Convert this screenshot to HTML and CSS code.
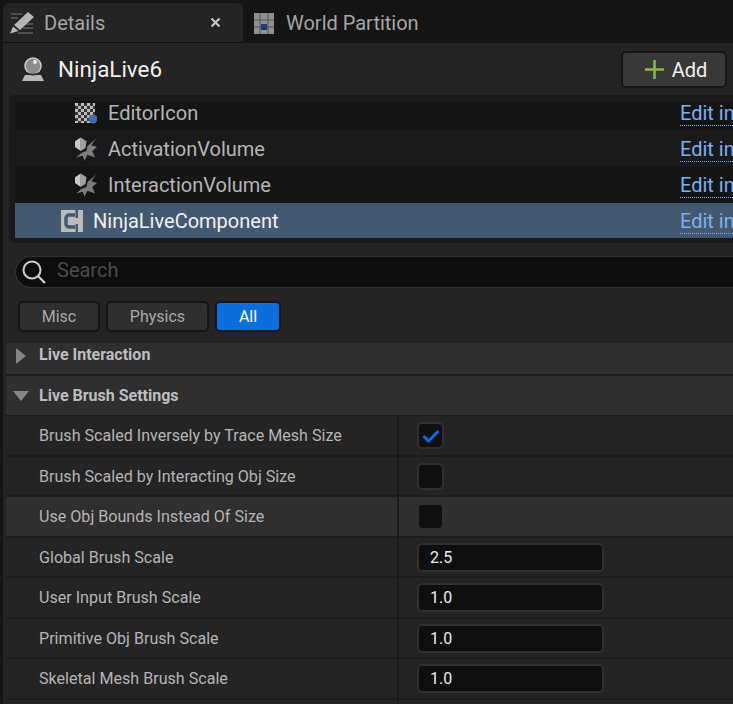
FILE: index.html
```html
<!DOCTYPE html>
<html lang="en">
<head>
<meta charset="utf-8">
<title>Details</title>
<link rel="stylesheet" href="styles.css">
</head>
<body>
<div class="tabs">
  <div class="tab active">
    <svg class="tab-icon" width="24" height="24" viewBox="0 0 24 24"><path d="M1 3h11M1 7h7M15 13h8M13 17h10M8 22h15" stroke="#7a7a7a" stroke-width="1.200" fill="none"/><path d="M18 1l6 5-14 13-6-5zM3 15.500l5.500 4.500L0 22.500z" fill="#b5b5b5"/></svg>
    <span class="tab-label">Details</span>
    <svg class="close" width="11" height="11" viewBox="0 0 11 11"><path d="M1.500 1.500l8 8M9.500 1.500l-8 8" stroke="#c4c4c4" stroke-width="2.200"/></svg>
  </div>
  <div class="tab">
    <svg class="tab-icon wp" width="20" height="21" viewBox="0 0 20 21"><rect width="20" height="21" fill="#8f8f8f"/><path d="M6 0v21M14 0v21M0 7h20M0 14h20" stroke="#555" stroke-width="1"/><rect x="7" y="11" width="6" height="6" fill="#1d3f73"/></svg>
    <span class="tab-label">World Partition</span>
  </div>
</div>
<main class="panel">
  <header class="actor">
    <div class="actor-name">
      <svg width="24" height="24" viewBox="0 0 24 24"><circle cx="12" cy="9" r="8" fill="#8c8c8c" stroke="#c9c9c9" stroke-width="1.500"/><circle cx="14" cy="5" r="2" fill="#eee"/><path d="M4 18h16l3 6H1z" fill="#b8b8b8"/><path d="M6 16c3 2 9 2 12 0" stroke="#2a2a2a" stroke-width="2" fill="none"/></svg>
      <span>NinjaLive6</span>
    </div>
    <button class="add"><svg width="21" height="21" viewBox="0 0 21 21"><path d="M10.500 1v19M1 10.500h19" stroke="#86b843" stroke-width="2.600"/></svg>Add</button>
  </header>
  <section class="tree">
    <div class="tree-row odd first">
      <svg class="ic" width="22" height="22" viewBox="0 0 22 22"><defs><pattern id="chk" width="6" height="6" patternUnits="userSpaceOnUse"><rect width="6" height="6" fill="#333"/><rect width="3" height="3" fill="#bdbdbd"/><rect x="3" y="3" width="3" height="3" fill="#bdbdbd"/></pattern></defs><rect width="20" height="20" fill="url(#chk)"/><circle cx="18" cy="16" r="4.500" fill="#476da8"/></svg>
      <span>EditorIcon</span><a class="edit">Edit in</a>
    </div>
    <div class="tree-row">
      <svg class="ic" width="22" height="24" viewBox="0 0 23 24"><path d="M22 1l-5 7 6 2-5 4 3 7-8-3-3 6-2-5-7 2 6-5 5-2 1-5z" fill="#7d7d7d"/><path d="M0 4l6-4v14l-6-4z" fill="#c9c9c9"/><path d="M6 0l6 4-1 7-5 3z" fill="#a0a0a0"/></svg>
      <span>ActivationVolume</span><a class="edit">Edit in</a>
    </div>
    <div class="tree-row odd">
      <svg class="ic" width="22" height="24" viewBox="0 0 23 24"><path d="M22 1l-5 7 6 2-5 4 3 7-8-3-3 6-2-5-7 2 6-5 5-2 1-5z" fill="#7d7d7d"/><path d="M0 4l6-4v14l-6-4z" fill="#c9c9c9"/><path d="M6 0l6 4-1 7-5 3z" fill="#a0a0a0"/></svg>
      <span>InteractionVolume</span><a class="edit">Edit in</a>
    </div>
    <div class="tree-row selected">
      <svg class="ic" width="22" height="22" viewBox="0 0 22 22"><path d="M0 0h22v22H0z" fill="#bcbcbc"/><path d="M14 5H8a3 3 0 0 0-3 3v6a3 3 0 0 0 3 3h6" stroke="#44586f" stroke-width="3.500" fill="none"/><path d="M14.500 0h2.500v8h-2.500zM14.500 14h2.500v8h-2.500z" fill="#44586f"/></svg>
      <span>NinjaLiveComponent</span><a class="edit">Edit in</a>
    </div>
  </section>
  <div class="search">
    <svg width="24" height="24" viewBox="0 0 24 24"><circle cx="10" cy="10" r="8.500" stroke="#d0d0d0" stroke-width="2" fill="none"/><path d="M16 16l7 7" stroke="#d0d0d0" stroke-width="2.200"/></svg>
    <span>Search</span>
  </div>
  <div class="chips">
    <span class="chip misc">Misc</span>
    <span class="chip physics">Physics</span>
    <span class="chip all">All</span>
  </div>
  <section class="props">
    <div class="cat collapsed"><i class="tri right"></i>Live Interaction</div>
    <div class="cat expanded"><i class="tri down"></i>Live Brush Settings</div>
    <div class="row"><div class="name">Brush Scaled Inversely by Trace Mesh Size</div><div class="val"><span class="check"><svg width="18" height="14" viewBox="0 0 18 14"><path d="M1.500 7l5 5L16.500 2" stroke="#0a70e0" stroke-width="3" fill="none"/></svg></span></div></div>
    <div class="row"><div class="name">Brush Scaled by Interacting Obj Size</div><div class="val"><span class="check"></span></div></div>
    <div class="row hover"><div class="name">Use Obj Bounds Instead Of Size</div><div class="val"><span class="check"></span></div></div>
    <div class="row"><div class="name">Global Brush Scale</div><div class="val"><span class="num">2.5</span></div></div>
    <div class="row"><div class="name">User Input Brush Scale</div><div class="val"><span class="num">1.0</span></div></div>
    <div class="row"><div class="name">Primitive Obj Brush Scale</div><div class="val"><span class="num">1.0</span></div></div>
    <div class="row"><div class="name">Skeletal Mesh Brush Scale</div><div class="val"><span class="num">1.0</span></div></div>
    <div class="row tail"><div class="name"></div><div class="val"></div></div>
  </section>
</main>
</body>
</html>
```
FILE: styles.css
```css
* { box-sizing: border-box; }
html, body { margin: 0; height: 100%; }
body {
  width: 733px;
  height: 704px;
  overflow: hidden;
  background: #151515;
  font-family: Roboto, "Liberation Sans", sans-serif;
  color: #bdbdbd;
  padding-top: 3px;
  padding-left: 3px;
}
svg { display: block; flex: none; }

.tabs { display: flex; height: 40px; }
.tab { display: flex; align-items: center; color: #a5a5a5; font-size: 20px; }
.tab.active {
  width: 240px;
  background: #242424;
  border-radius: 6px 6px 0 0;
  padding-left: 7px;
  border-bottom: 1px solid #101010;
}
.tab.active .tab-icon { margin-right: 10px; }
.close { margin-left: 105px; }
.tab .wp { margin: 0 12px 0 11px; }

.panel { height: 661px; background: #242424; overflow: hidden; }
.actor {
  height: 52px;
  display: flex;
  align-items: center;
  justify-content: space-between;
  padding: 0 6px 0 18px;
}
.actor-name { display: flex; align-items: center; gap: 13px; color: #f0f0f0; font-size: 22.400px; }
.add {
  width: 106px;
  height: 37px;
  margin-top: 1px;
  padding: 0 0 0 3px;
  display: flex;
  align-items: center;
  justify-content: center;
  gap: 7px;
  background: #383838;
  border: 2px solid #151515;
  border-radius: 5px;
  color: #f0f0f0;
  font: 20px Roboto, sans-serif;
}

.tree {
  margin-left: 6px;
  height: 148px;
  padding: 6px 0 5px 6px;
  background: #1a1a1a;
  border-radius: 5px 0 0 5px;
  overflow: hidden;
}
.tree-row {
  height: 36px;
  display: flex;
  align-items: center;
  padding-left: 60px;
  font-size: 20px;
  color: #b5b5b5;
  background: #1a1a1a;
}
.tree-row.odd { background: #151515; }
.tree-row.first { height: 30px; padding-bottom: 5px; }
.tree-row.first span { margin-bottom: 2px; }
.tree-row .ic { margin-right: 11px; }
.tree-row span { flex: none; width: 572px; }
.edit {
  flex: none;
  margin-top: 2px;
  color: #7cb0ef;
  border-bottom: 1px dotted #7cb0ef;
  line-height: 23px;
  white-space: nowrap;
}
.tree-row.first .edit { margin-top: 0; }
.tree-row.selected {
  height: 35px;
  background: #44586f;
  padding-left: 46px;
  color: #f0f0f0;
}
.tree-row.selected .ic { margin-right: 10px; }
.tree-row.selected span { width: 587px; }

.search {
  margin: 13px 0 0 12px;
  height: 32px;
  display: flex;
  align-items: center;
  gap: 11px;
  padding: 0 0 4px 6px;
  background: #0d0d0d;
  border: 1px solid #333;
  border-right: 0;
  border-radius: 16px 0 0 16px;
  color: #4c4c4c;
  font-size: 20px;
}
.search svg { margin-top: 4px; }

.chips { display: flex; gap: 6px; margin: 13px 0 11px 15px; }
.chip {
  height: 31px;
  display: flex;
  align-items: center;
  justify-content: center;
  background: #2f2f2f;
  border: 2px solid #151515;
  border-radius: 5px;
  color: #a8a8a8;
  font-size: 16px;
}
.misc { width: 82px; }
.physics { width: 103px; }
.all { width: 66px; background: #0a6fdc; color: #fff; border-color: #14181e; }

.props { margin-left: 3px; }
.cat {
  display: flex;
  align-items: center;
  font-size: 16px;
  font-weight: 700;
  color: #bdbdbd;
  background: #2f2f2f;
  padding-left: 7px;
}
.cat.collapsed { height: 33px; border-bottom: 2px solid #1a1a1a; padding: 0 0 8px 10px; }
.cat.expanded { height: 40.250px; border-bottom: 1px solid #1a1a1a; }
.tri { display: block; flex: none; width: 0; height: 0; }
.tri.right { border-left: 10px solid #858585; border-top: 8px solid transparent; border-bottom: 8px solid transparent; margin-right: 13px; margin-top: 2px; }
.tri.down { border-top: 10px solid #858585; border-left: 8px solid transparent; border-right: 8px solid transparent; margin-right: 10px; }

.row {
  height: 40.500px;
  display: flex;
  background: #242424;
  border-bottom: 2px solid #1c1c1c;
}
.row.hover { background: #2f2f2f; }
.row.tail { height: 5px; border-bottom: 0; }
.name {
  width: 391px;
  display: flex;
  align-items: center;
  padding-left: 33px;
  font-size: 16.100px;
  color: #b4b4b4;
}
.val {
  flex: 1;
  display: flex;
  align-items: center;
  padding-left: 18px;
  border-left: 2px solid #1a1a1a;
}
.check {
  width: 27px;
  height: 27px;
  display: flex;
  align-items: center;
  justify-content: center;
  background: #101010;
  border: 2px solid #303030;
  border-radius: 5px;
}
.num {
  width: 187px;
  height: 29px;
  display: flex;
  align-items: center;
  padding-left: 11px;
  background: #0f0f0f;
  border: 2px solid #303030;
  border-radius: 5px;
  color: #eaeaea;
  font-size: 16px;
}
```
